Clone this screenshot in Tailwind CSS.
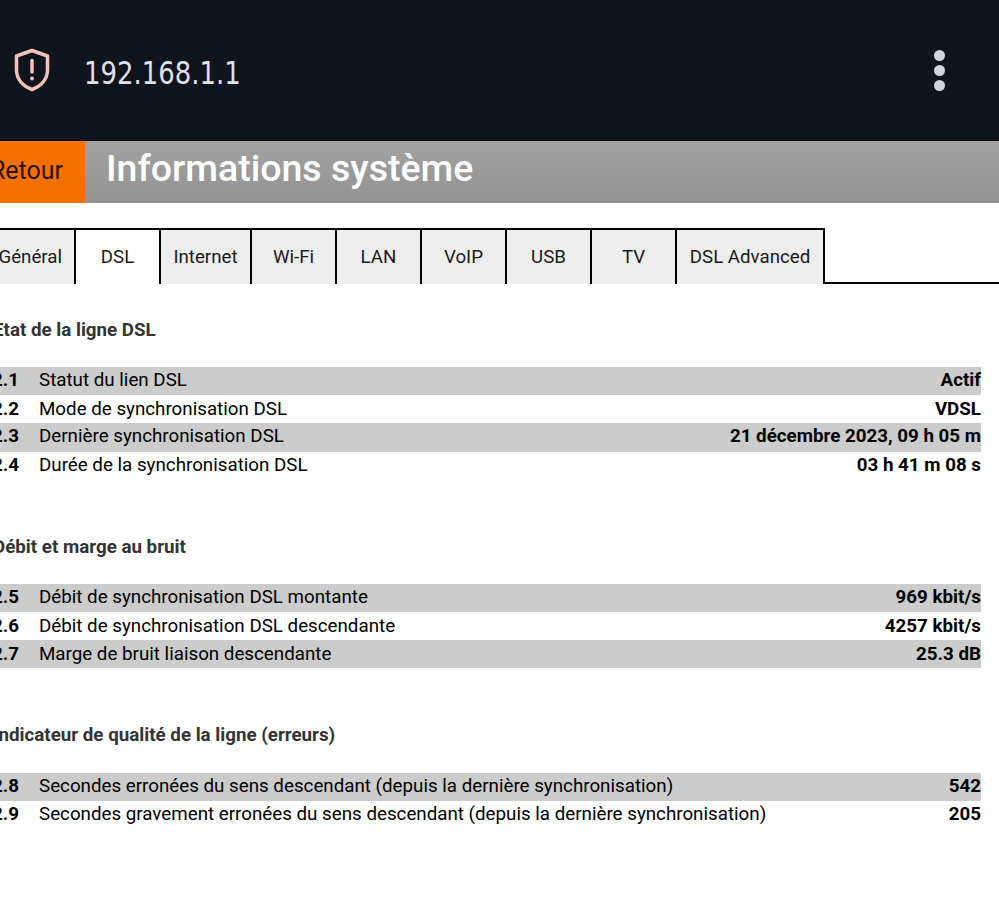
<!DOCTYPE html>
<html lang="fr">
<head>
    <meta charset="UTF-8">
    <meta name="viewport" content="width=device-width, initial-scale=1.0">
    <title>Informations système</title>
    <script src="https://cdn.jsdelivr.net/npm/@tailwindcss/browser@4"></script>
</head>
<body class="bg-white overflow-hidden font-['Roboto',sans-serif] text-black h-[912px]">
    <!-- Browser bar -->
    <header class="h-[141px] bg-[#10141d] flex items-center justify-between pl-[13px] pr-[54px] border-b border-[#0a0c10]">
        <div class="flex items-center gap-[33px]">
            <svg width="38" height="44" viewBox="0 0 38 44" fill="none" stroke="#f6c3ba" stroke-width="3.5" stroke-linejoin="round" stroke-linecap="round">
                <path d="M19 2.5 L34.5 8 V22 C34.5 31 28 38 19 41.5 C10 38 3.5 31 3.5 22 V8 Z"/>
                <path d="M19 12.5 V24"/>
                <circle cx="19" cy="30.5" r="1.2" fill="#f6c3ba" stroke-width="1.5"/>
            </svg>
            <span class="mt-[6px] font-['DejaVu_Sans',sans-serif] text-[32px] text-[#dfe2e8] whitespace-nowrap origin-left scale-x-[0.81] w-[160px]">192.168.1.1</span>
        </div>
        <div class="flex flex-col gap-[4px]">
            <span class="w-[11px] h-[11px] rounded-full bg-[#d0d4dc]"></span>
            <span class="w-[11px] h-[11px] rounded-full bg-[#d0d4dc]"></span>
            <span class="w-[11px] h-[11px] rounded-full bg-[#d0d4dc]"></span>
        </div>
    </header>

    <!-- Title -->
    <div class="h-[62px] flex bg-gradient-to-b from-[#a2a2a2] to-[#939393]">
        <div class="w-[85px] pb-[2px] bg-[#f47100] flex items-center justify-end pr-[22px] text-[25px] text-[#2a1204] whitespace-nowrap">Retour</div>
        <h1 class="ml-[21px] text-[37.5px] leading-[55px] font-medium text-white">Informations système</h1>
    </div>

    <!-- Tabs -->
    <nav class="mt-[25px] h-[56px] flex text-[18.7px] text-[#1a1a1a]">
        <div class="w-[76px] flex items-center justify-end pr-[12px] bg-[#eeeeee] border-t-2 border-r-2 border-black">Général</div>
        <div class="w-[85px] flex items-center justify-center bg-white border-t-2 border-r-2 border-black">DSL</div>
        <div class="w-[91px] flex items-center justify-center bg-[#eeeeee] border-t-2 border-r-2 border-black">Internet</div>
        <div class="w-[85px] flex items-center justify-center bg-[#eeeeee] border-t-2 border-r-2 border-black">Wi-Fi</div>
        <div class="w-[85px] flex items-center justify-center bg-[#eeeeee] border-t-2 border-r-2 border-black">LAN</div>
        <div class="w-[85px] flex items-center justify-center bg-[#eeeeee] border-t-2 border-r-2 border-black">VoIP</div>
        <div class="w-[85px] flex items-center justify-center bg-[#eeeeee] border-t-2 border-r-2 border-black">USB</div>
        <div class="w-[85px] flex items-center justify-center bg-[#eeeeee] border-t-2 border-r-2 border-black">TV</div>
        <div class="w-[148px] flex items-center justify-center bg-[#eeeeee] border-t-2 border-r-2 border-black">DSL Advanced</div>
        <div class="flex-1 border-b-2 border-black"></div>
    </nav>

    <main class="pr-[18px] text-[18.76px]">
        <h2 class="mt-[34px] -ml-[7px] h-[24px] leading-[24px] font-bold text-[#333333]">Etat de la ligne DSL</h2>
        <div class="mt-[25px]">
            <div class="h-[28px] pb-[1px] flex items-center bg-[#cccccc]"><b class="w-[19px] flex justify-end whitespace-nowrap">2.1</b><span class="ml-[20px]">Statut du lien DSL</span><b class="ml-auto">Actif</b></div>
            <div class="h-[28px] flex items-center"><b class="w-[19px] flex justify-end whitespace-nowrap">2.2</b><span class="ml-[20px]">Mode de synchronisation DSL</span><b class="ml-auto">VDSL</b></div>
            <div class="h-[29px] pb-[2px] flex items-center bg-[#cccccc]"><b class="w-[19px] flex justify-end whitespace-nowrap">2.3</b><span class="ml-[20px]">Dernière synchronisation DSL</span><b class="ml-auto">21 décembre 2023, 09 h 05 m</b></div>
            <div class="h-[28px] pb-[1px] flex items-center"><b class="w-[19px] flex justify-end whitespace-nowrap">2.4</b><span class="ml-[20px]">Durée de la synchronisation DSL</span><b class="ml-auto">03 h 41 m 08 s</b></div>
        </div>

        <h2 class="mt-[55px] -ml-[7px] h-[24px] leading-[24px] font-bold text-[#333333]">Débit et marge au bruit</h2>
        <div class="mt-[25px]">
            <div class="h-[28px] pb-[1px] flex items-center bg-[#cccccc]"><b class="w-[19px] flex justify-end whitespace-nowrap">2.5</b><span class="ml-[20px]">Débit de synchronisation DSL montante</span><b class="ml-auto">969 kbit/s</b></div>
            <div class="h-[28px] flex items-center"><b class="w-[19px] flex justify-end whitespace-nowrap">2.6</b><span class="ml-[20px]">Débit de synchronisation DSL descendante</span><b class="ml-auto">4257 kbit/s</b></div>
            <div class="h-[28px] flex items-center bg-[#cccccc]"><b class="w-[19px] flex justify-end whitespace-nowrap">2.7</b><span class="ml-[20px]">Marge de bruit liaison descendante</span><b class="ml-auto">25.3 dB</b></div>
        </div>

        <h2 class="mt-[55px] -ml-[7px] h-[24px] leading-[24px] font-bold text-[#333333] whitespace-nowrap">Indicateur de qualité de la ligne (erreurs)</h2>
        <div class="mt-[26px]">
            <div class="h-[28px] pb-[1px] flex items-center bg-[#cccccc]"><b class="w-[19px] flex justify-end whitespace-nowrap">2.8</b><span class="ml-[20px]">Secondes erronées du sens descendant (depuis la dernière synchronisation)</span><b class="ml-auto">542</b></div>
            <div class="h-[28px] pb-[1px] flex items-center"><b class="w-[19px] flex justify-end whitespace-nowrap">2.9</b><span class="ml-[20px]">Secondes gravement erronées du sens descendant (depuis la dernière synchronisation)</span><b class="ml-auto">205</b></div>
        </div>
    </main>
</body>
</html>
